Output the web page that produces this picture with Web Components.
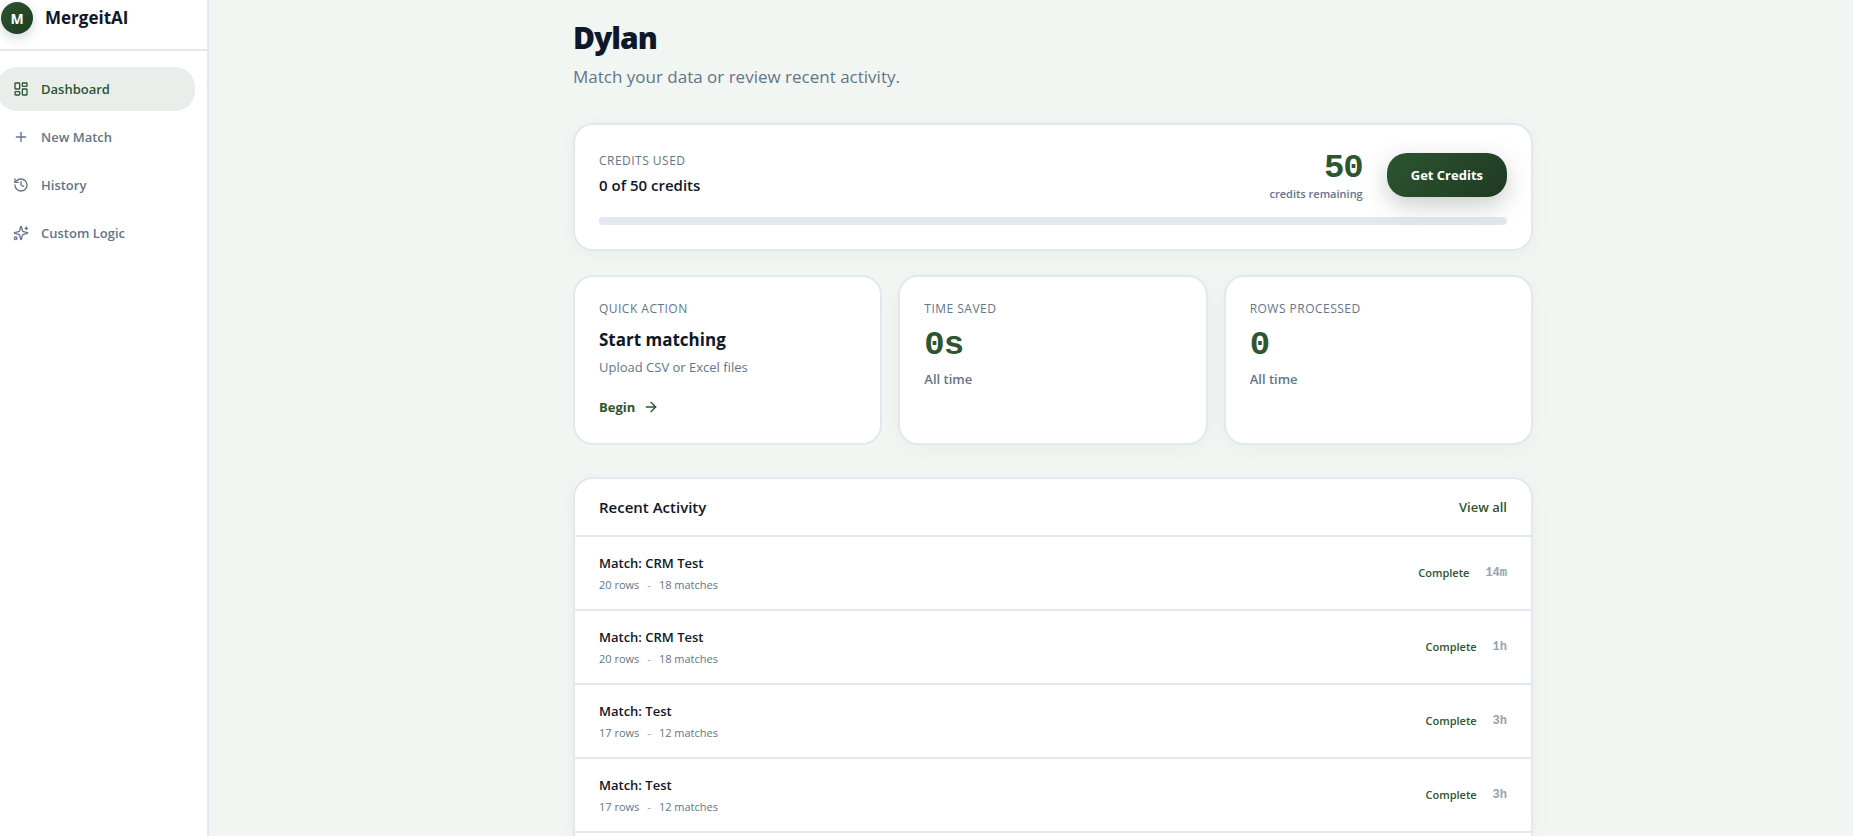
<!DOCTYPE html>
<html lang="en">
<head>
    <meta charset="UTF-8">
    <meta name="viewport" content="width=device-width, initial-scale=1.0">
    <title>MergeitAI - Dashboard</title>
    <style>
        :root {
            --bg: #f1f6f2;
            --line: #e2e8f0;
            --ink: #0f172a;
            --muted: #64748b;
            --faint: #94a3b8;
            --green: #2c5530;
            --green-dark: #1f3a22;
            --mono: "Liberation Mono", monospace;
        }
        body {
            margin: 0;
            background: var(--bg);
            color: var(--ink);
            font-family: "Open Sans", "Noto Sans", sans-serif;
        }
    </style>
</head>
<body>

<app-shell>
    <side-bar slot="sidebar">
        <nav-item icon="dashboard" active>Dashboard</nav-item>
        <nav-item icon="plus">New Match</nav-item>
        <nav-item icon="history">History</nav-item>
        <nav-item icon="sparkles">Custom Logic</nav-item>
    </side-bar>

    <page-heading>
        Dylan
        <span slot="subtitle">Match your data or review recent activity.</span>
    </page-heading>
    <credits-card used="0" total="50"></credits-card>
    <card-grid>
        <action-card label="Quick action" link="Begin">
            Start matching
            <span slot="description">Upload CSV or Excel files</span>
        </action-card>
        <stat-card label="Time saved" value="0s">All time</stat-card>
        <stat-card label="Rows processed" value="0">All time</stat-card>
    </card-grid>
    <activity-list>
        <activity-row rows="20" matches="18" status="Complete" age="14m">Match: CRM Test</activity-row>
        <activity-row rows="20" matches="18" status="Complete" age="1h">Match: CRM Test</activity-row>
        <activity-row rows="17" matches="12" status="Complete" age="3h">Match: Test</activity-row>
        <activity-row rows="17" matches="12" status="Complete" age="3h">Match: Test</activity-row>
    </activity-list>
</app-shell>

<script>
    const ICONS = {
        dashboard: '<rect x="3" y="3" width="7" height="9" rx="1"/><rect x="14" y="3" width="7" height="5" rx="1"/><rect x="14" y="12" width="7" height="9" rx="1"/><rect x="3" y="16" width="7" height="5" rx="1"/>',
        plus: '<path d="M5 12h14"/><path d="M12 5v14"/>',
        history: '<path d="M3 12a9 9 0 1 0 9-9 9.75 9.75 0 0 0-6.74 2.74L3 8"/><path d="M3 3v5h5"/><path d="M12 7v5l4 2"/>',
        sparkles: '<path d="M9.937 15.5A2 2 0 0 0 8.5 14.063l-6.135-1.582a.5.5 0 0 1 0-.962L8.5 9.936A2 2 0 0 0 9.937 8.5l1.582-6.135a.5.5 0 0 1 .963 0L14.063 8.5A2 2 0 0 0 15.5 9.937l6.135 1.581a.5.5 0 0 1 0 .964L15.5 14.063a2 2 0 0 0-1.437 1.437l-1.582 6.135a.5.5 0 0 1-.963 0z"/><path d="M20 3v4"/><path d="M22 5h-4"/><circle cx="4" cy="20" r="2"/>',
        arrow: '<path d="M5 12h14"/><path d="m12 5 7 7-7 7"/>'
    };

    // shared by every white panel
    const CARD = `
        * { box-sizing: border-box; }
        :host {
            display: block;
            box-sizing: border-box;
            background: #fff;
            border: 2px solid var(--line);
            border-radius: 20px;
            box-shadow: 0 4px 20px rgba(31, 58, 34, 0.04);
        }
        .label {
            font-size: 12px;
            line-height: 16px;
            font-weight: 500;
            letter-spacing: 0.04em;
            text-transform: uppercase;
            color: var(--muted);
        }
        .number {
            font: 700 34px/40px var(--mono);
            letter-spacing: -1px;
            color: var(--green);
        }
    `;

    class BaseElement extends HTMLElement {
        constructor() {
            super();
            this.attachShadow({ mode: 'open' });
        }

        connectedCallback() {
            this.shadowRoot.innerHTML = this.render();
        }

        attr(name) {
            return this.getAttribute(name) || '';
        }
    }

    class AppIcon extends BaseElement {
        render() {
            return `
                <style>
                    :host { display: block; flex: none; width: 16px; height: 16px; }
                    svg { display: block; width: 100%; height: 100%; }
                </style>
                <svg viewBox="0 0 24 24" fill="none" stroke="currentColor" stroke-width="2"
                     stroke-linecap="round" stroke-linejoin="round" aria-hidden="true">${ICONS[this.attr('name')]}</svg>
            `;
        }
    }

    class AppShell extends BaseElement {
        render() {
            return `
                <style>
                    :host {
                        display: grid;
                        grid-template-columns: 209px 1fr;
                        height: 100vh;
                        overflow: hidden;
                    }
                    main {
                        display: flex;
                        flex-direction: column;
                        align-items: center;
                        padding: 20px 0 0 44px;
                        min-width: 0;
                        min-height: 0;
                    }
                    .content {
                        display: flex;
                        flex-direction: column;
                        flex: 1;
                        width: 100%;
                        max-width: 960px;
                    }
                </style>
                <slot name="sidebar"></slot>
                <main><div class="content"><slot></slot></div></main>
            `;
        }
    }

    class SideBar extends BaseElement {
        render() {
            return `
                <style>
                    :host {
                        display: block;
                        background: #fff;
                        border-right: 2px solid var(--line);
                        overflow: hidden;
                    }
                    header {
                        display: flex;
                        align-items: center;
                        gap: 12px;
                        padding: 2px 1px 15px;
                        border-bottom: 2px solid var(--line);
                    }
                    .mark {
                        display: grid;
                        place-items: center;
                        width: 32px;
                        height: 32px;
                        border-radius: 50%;
                        background: linear-gradient(135deg, var(--green), var(--green-dark));
                        box-shadow: 0 4px 12px rgba(31, 58, 34, 0.2);
                        color: #fff;
                        font-size: 14px;
                        font-weight: 700;
                    }
                    .name {
                        font-size: 17px;
                        line-height: 24px;
                        font-weight: 700;
                    }
                    nav {
                        display: flex;
                        flex-direction: column;
                        gap: 4px;
                        margin-left: -3px;
                        padding: 16px 12px 0 0;
                    }
                </style>
                <header>
                    <span class="mark">M</span>
                    <span class="name">MergeitAI</span>
                </header>
                <nav><slot></slot></nav>
            `;
        }
    }

    class NavItem extends BaseElement {
        render() {
            return `
                <style>
                    :host { display: block; color: var(--muted); }
                    :host([active]) { color: var(--green); }
                    a {
                        display: flex;
                        align-items: center;
                        gap: 12px;
                        height: 44px;
                        padding: 0 16px;
                        border-radius: 20px;
                        color: inherit;
                        font-size: 13px;
                        line-height: 20px;
                        font-weight: 600;
                        text-decoration: none;
                    }
                    :host([active]) a { background: #e9eeea; }
                </style>
                <a href="#"><app-icon name="${this.attr('icon')}"></app-icon><slot></slot></a>
            `;
        }
    }

    class PageHeading extends BaseElement {
        render() {
            return `
                <style>
                    :host { display: block; margin-bottom: 32px; }
                    h1 {
                        margin: 0 0 7px;
                        font-size: 30px;
                        line-height: 36px;
                        font-weight: 800;
                        letter-spacing: -1px;
                    }
                    p {
                        margin: 0;
                        font-size: 17px;
                        line-height: 28px;
                        color: var(--muted);
                    }
                </style>
                <h1><slot></slot></h1>
                <p><slot name="subtitle"></slot></p>
            `;
        }
    }

    class CreditsCard extends BaseElement {
        render() {
            const used = Number(this.attr('used'));
            const total = Number(this.attr('total'));
            return `
                <style>
                    ${CARD}
                    :host { padding: 24px; margin-bottom: 24px; }
                    .top {
                        display: flex;
                        align-items: center;
                        margin-bottom: 16px;
                    }
                    .usage { flex: 1; }
                    .value {
                        margin-top: 4px;
                        font-size: 15px;
                        line-height: 24px;
                        font-weight: 600;
                    }
                    .remaining { text-align: right; margin-right: 24px; }
                    .number { line-height: 38px; }
                    .note {
                        font-size: 11px;
                        line-height: 14px;
                        font-weight: 600;
                        color: var(--muted);
                    }
                    button {
                        position: relative;
                        height: 44px;
                        padding: 0 24px;
                        border: none;
                        border-radius: 20px;
                        background: linear-gradient(135deg, var(--green), var(--green-dark));
                        box-shadow: 0 8px 24px rgba(31, 58, 34, 0.25);
                        color: #fff;
                        font: 700 13px/20px "Open Sans", "Noto Sans", sans-serif;
                        cursor: pointer;
                    }
                    progress {
                        display: block;
                        appearance: none;
                        width: 100%;
                        height: 8px;
                        border: none;
                        border-radius: 4px;
                        overflow: hidden;
                        background: var(--line);
                    }
                    progress::-webkit-progress-bar { background: var(--line); }
                    progress::-webkit-progress-value { background: var(--green); }
                </style>
                <div class="top">
                    <div class="usage">
                        <div class="label" id="label">Credits used</div>
                        <div class="value">${used} of ${total} credits</div>
                    </div>
                    <div class="remaining">
                        <div class="number">${total - used}</div>
                        <div class="note">credits remaining</div>
                    </div>
                    <button type="button">Get Credits</button>
                </div>
                <progress value="${used}" max="${total}" aria-labelledby="label"></progress>
            `;
        }
    }

    class CardGrid extends BaseElement {
        render() {
            return `
                <style>
                    :host {
                        display: grid;
                        grid-template-columns: repeat(3, 1fr);
                        gap: 16px;
                        margin-bottom: 32px;
                    }
                </style>
                <slot></slot>
            `;
        }
    }

    class ActionCard extends BaseElement {
        render() {
            return `
                <style>
                    ${CARD}
                    :host { padding: 24px; box-shadow: none; }
                    h2 {
                        margin: 11px 0 5px;
                        font-size: 17px;
                        line-height: 24px;
                        font-weight: 700;
                    }
                    p {
                        margin: 0 0 18px;
                        font-size: 13px;
                        line-height: 20px;
                        color: var(--muted);
                    }
                    a {
                        display: flex;
                        align-items: center;
                        gap: 8px;
                        width: fit-content;
                        color: var(--green);
                        font-size: 13px;
                        line-height: 24px;
                        font-weight: 700;
                        text-decoration: none;
                    }
                </style>
                <div class="label">${this.attr('label')}</div>
                <h2><slot></slot></h2>
                <p><slot name="description"></slot></p>
                <a href="#">${this.attr('link')} <app-icon name="arrow"></app-icon></a>
            `;
        }
    }

    class StatCard extends BaseElement {
        render() {
            return `
                <style>
                    ${CARD}
                    :host { padding: 24px; }
                    .number { margin: 8px 0 4px; }
                    .note {
                        font-size: 13px;
                        line-height: 20px;
                        font-weight: 600;
                        color: var(--muted);
                    }
                </style>
                <div class="label">${this.attr('label')}</div>
                <div class="number">${this.attr('value')}</div>
                <div class="note"><slot></slot></div>
            `;
        }
    }

    class ActivityList extends BaseElement {
        render() {
            return `
                <style>
                    ${CARD}
                    /* the panel runs on past the bottom of the window */
                    :host {
                        flex: 1;
                        border-bottom: none;
                        border-radius: 20px 20px 0 0;
                    }
                    header {
                        display: flex;
                        align-items: center;
                        justify-content: space-between;
                        height: 58px;
                        padding: 0 24px;
                        border-bottom: 2px solid var(--line);
                    }
                    h2 {
                        margin: 0;
                        font-size: 15px;
                        line-height: 24px;
                        font-weight: 600;
                    }
                    a {
                        color: var(--green);
                        font-size: 13px;
                        line-height: 20px;
                        font-weight: 600;
                        text-decoration: none;
                    }
                </style>
                <header>
                    <h2>Recent Activity</h2>
                    <a href="#">View all</a>
                </header>
                <slot></slot>
            `;
        }
    }

    class ActivityRow extends BaseElement {
        render() {
            return `
                <style>
                    :host {
                        display: flex;
                        align-items: center;
                        gap: 16px;
                        padding: 16px 24px;
                        border-bottom: 2px solid var(--line);
                        font-size: 11px;
                        line-height: 16px;
                        font-weight: 600;
                    }
                    .info { flex: 1; }
                    .title {
                        font-size: 13px;
                        line-height: 20px;
                    }
                    .meta {
                        display: flex;
                        gap: 8px;
                        margin-top: 4px;
                        font-weight: 500;
                        color: var(--muted);
                    }
                    .dash { color: var(--faint); }
                    .status { color: var(--green); }
                    .age {
                        font: 700 12px/16px var(--mono);
                        color: var(--faint);
                    }
                </style>
                <div class="info">
                    <div class="title"><slot></slot></div>
                    <div class="meta">
                        <span>${this.attr('rows')} rows</span>
                        <span class="dash">-</span>
                        <span>${this.attr('matches')} matches</span>
                    </div>
                </div>
                <span class="status">${this.attr('status')}</span>
                <span class="age">${this.attr('age')}</span>
            `;
        }
    }

    customElements.define('app-icon', AppIcon);
    customElements.define('app-shell', AppShell);
    customElements.define('side-bar', SideBar);
    customElements.define('nav-item', NavItem);
    customElements.define('page-heading', PageHeading);
    customElements.define('credits-card', CreditsCard);
    customElements.define('card-grid', CardGrid);
    customElements.define('action-card', ActionCard);
    customElements.define('stat-card', StatCard);
    customElements.define('activity-list', ActivityList);
    customElements.define('activity-row', ActivityRow);
</script>

</body>
</html>
